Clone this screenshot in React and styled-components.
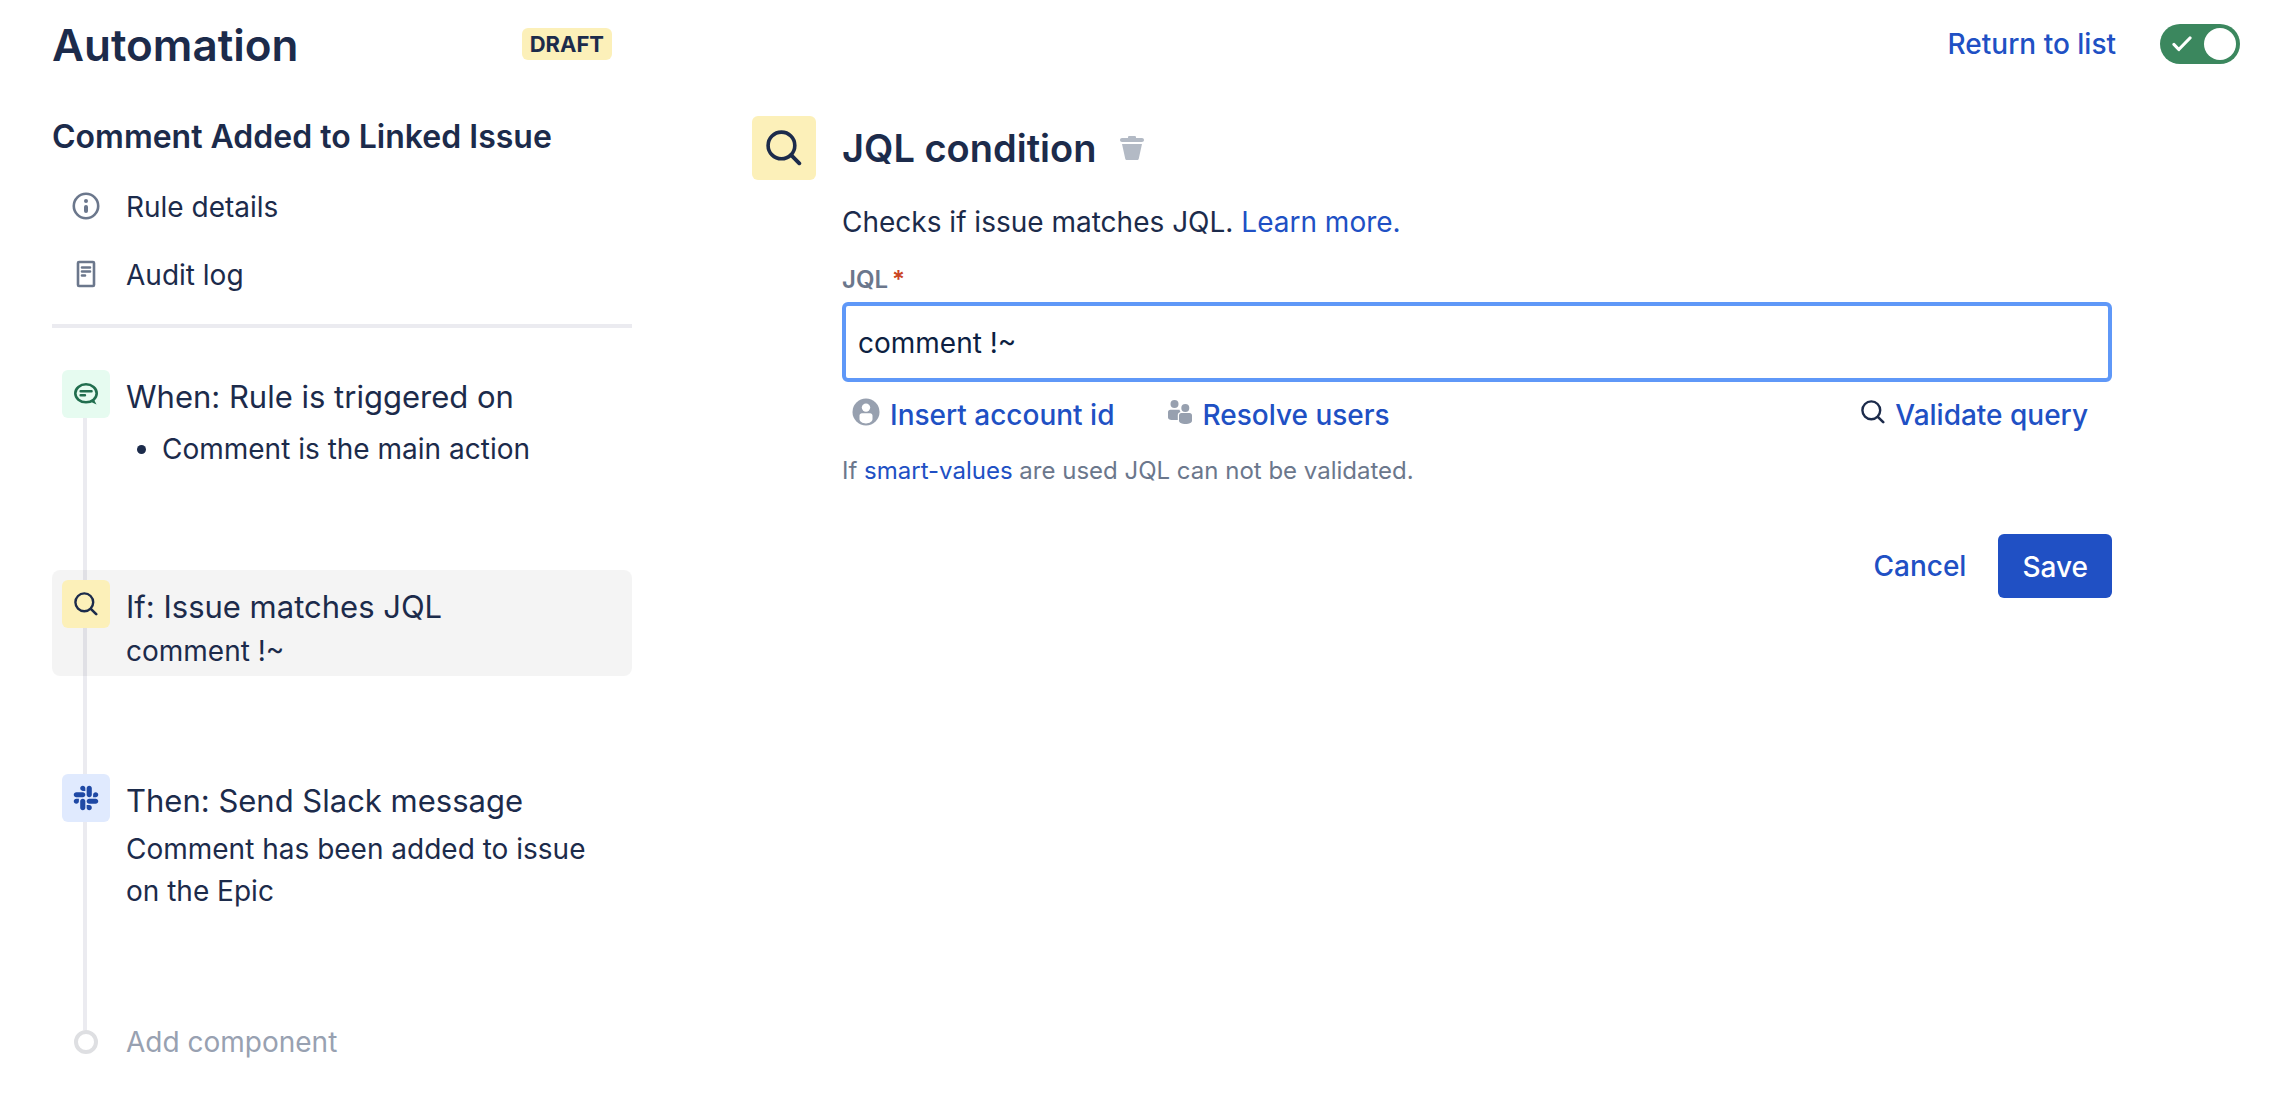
import { useState } from "react";
import styled, { createGlobalStyle } from "styled-components";
import { FaSlack } from "react-icons/fa";

const GlobalStyle = createGlobalStyle`
  * {
    box-sizing: border-box;
  }

  body {
    margin: 0;
    background-color: #ffffff;
    color: #1c2b4b;
    font-family: Inter, "Liberation Sans", sans-serif;
    font-size: 28px;
    line-height: 40px;
  }
`;

const Page = styled.div`
  padding: 0 42px 40px 52px;
`;

const Header = styled.header`
  display: flex;
  align-items: center;
  justify-content: space-between;
  height: 88px;
`;

const HeaderTitle = styled.div`
  display: flex;
  align-items: center;
  justify-content: space-between;
  width: 580px;
  padding-right: 20px;
`;

const PageTitle = styled.h1`
  margin: 0;
  padding-top: 2px;
  font-size: 44px;
  font-weight: 600;
  line-height: 56px;
`;

const Badge = styled.span`
  padding: 0 8px;
  border-radius: 6px;
  background-color: #fcf0b9;
  font-size: 22px;
  font-weight: 700;
  line-height: 32px;
`;

const HeaderActions = styled.div`
  display: flex;
  align-items: center;
  gap: 44px;
`;

const Link = styled.a`
  color: #2050c4;
  font-weight: ${({ $medium }) => ($medium ? 500 : 400)};
  text-decoration: none;
`;

const ToggleLabel = styled.label`
  display: flex;
  align-items: center;
  justify-content: space-between;
  width: 80px;
  height: 40px;
  padding: 0 4px 0 12px;
  border-radius: 20px;
  background-color: #3b875e;
  cursor: pointer;
`;

const ToggleInput = styled.input`
  appearance: none;
  order: 1;
  width: 32px;
  height: 32px;
  margin: 0;
  border-radius: 50%;
  background-color: #ffffff;
`;

const Columns = styled.div`
  display: grid;
  grid-template-columns: 580px 1fr;
  gap: 120px;
  padding-top: 28px;
`;

const RuleName = styled.h2`
  margin: 0 0 15px;
  font-size: 32px;
  font-weight: 600;
  line-height: 42px;
`;

const RuleNav = styled.nav`
  display: flex;
  flex-direction: column;
  padding-bottom: 15px;
  border-bottom: 4px solid #ebebf0;
`;

const NavItem = styled.a`
  display: grid;
  grid-template-columns: 48px 1fr;
  gap: 16px;
  align-items: center;
  height: 68px;
  padding-left: 10px;
  color: inherit;
  text-decoration: none;

  svg {
    justify-self: center;
    margin-bottom: 2px;
  }
`;

const Timeline = styled.ol`
  margin: 32px 0 0;
  padding: 0 0 26px;
  list-style: none;
  background: linear-gradient(#ebebf0, #ebebf0) 31px 20px / 4px 100% no-repeat;
`;

const Step = styled.li`
  display: grid;
  grid-template-columns: 48px 1fr;
  gap: 16px;
  align-items: start;
  margin-bottom: 88px;
  padding: 10px 20px 4px 10px;
  border-radius: 8px;
  background-color: ${({ $selected }) =>
    $selected ? "rgba(9, 9, 9, 0.043)" : "transparent"};
`;

const Tile = styled.span`
  display: flex;
  align-items: center;
  justify-content: center;
  width: ${({ $large }) => ($large ? "64px" : "48px")};
  height: ${({ $large }) => ($large ? "64px" : "48px")};
  border-radius: 6px;
  background-color: ${({ $color }) => $color};
`;

const StepTitle = styled.h3`
  margin: 0;
  padding-top: 4px;
  font-size: 31px;
  font-weight: 400;
  line-height: 46px;
`;

const StepText = styled.p`
  margin: ${({ $spaced }) => ($spaced ? "4px" : "0")} 0 0;
  line-height: 42px;
`;

const StepList = styled.ul`
  margin: 8px 0;
  padding-left: 36px;
  line-height: 42px;
  list-style: disc;
`;

const AddButton = styled.button`
  display: grid;
  grid-template-columns: 48px 1fr;
  gap: 16px;
  align-items: center;
  padding: 0 0 0 10px;
  border: 0;
  background: none;
  color: #98a1b1;
  font: inherit;
  line-height: 24px;
  cursor: pointer;
`;

const AddDot = styled.span`
  justify-self: center;
  width: 24px;
  height: 24px;
  border: 4px solid #dedfe2;
  border-radius: 50%;
`;

const Main = styled.main`
  padding-right: 128px;
`;

const ConditionHeader = styled.div`
  display: flex;
  align-items: center;
`;

const ConditionTitle = styled.h2`
  margin: 0 24px 0 26px;
  font-size: 38px;
  font-weight: 600;
  line-height: 48px;
`;

const IconButton = styled.button`
  display: flex;
  padding: 0;
  border: 0;
  background: none;
  cursor: pointer;
`;

const Form = styled.form`
  padding: 22px 0 0 90px;
`;

const Description = styled.p`
  margin: 0 0 22px;
`;

const Label = styled.label`
  display: block;
  margin-bottom: 6px;
  color: #6b778c;
  font-size: 24px;
  font-weight: 600;
  line-height: 32px;
`;

const Required = styled.span`
  margin-left: 4px;
  color: #cb4424;
`;

const Input = styled.input`
  display: block;
  width: 100%;
  height: 80px;
  padding: 2px 12px 0;
  border: 4px solid #5f98f8;
  border-radius: 6px;
  outline: none;
  color: #0d1f42;
  font: inherit;
`;

const QueryActions = styled.div`
  display: flex;
  gap: 54px;
  padding: 13px 24px 20px 10px;
`;

const TextButton = styled.button`
  display: flex;
  align-items: center;
  gap: 10px;
  margin-left: ${({ $end }) => ($end ? "auto" : "0")};
  padding: 0;
  border: 0;
  background: none;
  color: #2050c4;
  font: inherit;
  font-weight: 500;
  cursor: pointer;

  svg {
    margin-bottom: 6px;
  }
`;

const Hint = styled.p`
  margin: 0;
  color: #6b778c;
  font-size: 24px;
  line-height: 32px;
`;

const FormActions = styled.div`
  display: flex;
  align-items: center;
  justify-content: flex-end;
  gap: 32px;
  padding-top: 47px;
`;

const SaveButton = styled.button`
  height: 64px;
  padding: 2px 24px 0;
  border: 0;
  border-radius: 6px;
  background-color: #2050c4;
  color: #ffffff;
  font: inherit;
  font-weight: 500;
  cursor: pointer;
`;

function SearchIcon({ size }) {
  return (
    <svg width={size} height={size} viewBox="0 0 24 24" fill="none" stroke="#1c2b4b">
      <circle cx="10.3" cy="10.3" r="8.9" strokeWidth="2.4" />
      <path d="M16.8 16.8 L22.2 22.2" strokeWidth="2.6" strokeLinecap="round" />
    </svg>
  );
}

function InfoIcon() {
  return (
    <svg width="28" height="28" viewBox="0 0 28 28" fill="#6b778c">
      <circle cx="14" cy="14" r="12.2" fill="none" stroke="#6b778c" strokeWidth="2.6" />
      <circle cx="14" cy="9" r="2" />
      <rect x="12" y="13" width="4" height="8" rx="2" />
    </svg>
  );
}

function LogIcon() {
  return (
    <svg width="20" height="28" viewBox="0 0 20 28" fill="none" stroke="#6b778c">
      <rect x="2" y="2" width="16" height="24" rx="1" strokeWidth="2.6" />
      <path d="M6 7.5h8M6 11.5h8M6 15.5h3" strokeWidth="2.6" strokeLinecap="round" />
    </svg>
  );
}

function CommentIcon() {
  return (
    <svg width="24" height="24" viewBox="0 0 24 24" fill="none" stroke="#216e4e">
      <ellipse cx="12" cy="11.3" rx="10.7" ry="9" strokeWidth="2.6" />
      <path d="M6.6 9.2h11M6.6 13.2h4.4" strokeWidth="2.4" strokeLinecap="round" />
      <path d="M16 19.5 L19.6 17 L22.5 22.6 Z" fill="#216e4e" stroke="none" />
    </svg>
  );
}

function TrashIcon() {
  return (
    <svg width="24" height="24" viewBox="0 0 24 24" fill="#b3bac5">
      <path d="M8 2V1.2C8 .5 8.6 0 9.3 0h5.4c.7 0 1.3.5 1.3 1.2V2h6c1.1 0 2 .9 2 2s-.9 2-2 2H2C.9 6 0 5.1 0 4s.9-2 2-2z" />
      <path d="M2 8h20l-3.2 14.4c-.2.9-.9 1.6-1.8 1.6H7c-.9 0-1.6-.7-1.8-1.6z" />
    </svg>
  );
}

function PersonIcon() {
  return (
    <svg width="28" height="28" viewBox="0 0 28 28">
      <circle cx="14" cy="14" r="13.5" fill="#97a0af" />
      <circle cx="14" cy="9.6" r="4.2" fill="#ffffff" />
      <path d="M7.5 17.6c0-1.4 1-2.4 2.4-2.4h8.2c1.4 0 2.4 1 2.4 2.4v3.4c0 2.4-2.8 4.4-6.5 4.4s-6.5-2-6.5-4.4z" fill="#ffffff" />
    </svg>
  );
}

function PeopleIcon() {
  return (
    <svg width="24" height="24" viewBox="0 0 24 24" fill="#97a0af">
      <circle cx="6.5" cy="4" r="4" />
      <circle cx="17.3" cy="8" r="4" />
      <path d="M0 12.2c0-1.4.9-2.4 2.4-2.4h9.2c.1 1 .4 1.7.9 2.3-1.6.3-2.7 1.5-2.7 3V20H3.5C1.500 20 0 19 0 17.5z" />
      <path d="M11 15.4c0-1.4 1-2.4 2.4-2.4h8.2c1.4 0 2.4 1 2.4 2.4v5.3c0 1.9-2.8 3.3-6.5 3.3S11 22.6 11 20.7z" />
    </svg>
  );
}

function CheckIcon() {
  return (
    <svg width="20" height="16" viewBox="0 0 20 16" fill="none" stroke="#ffffff">
      <path d="M2 8.5 L6.8 13.5 L18 2" strokeWidth="3.2" strokeLinecap="round" strokeLinejoin="round" />
    </svg>
  );
}

export default function App() {
  const [query, setQuery] = useState("comment !~");
  const [enabled, setEnabled] = useState(true);

  return (
    <>
      <GlobalStyle />
      <Page>
        <Header>
          <HeaderTitle>
            <PageTitle>Automation</PageTitle>
            <Badge>DRAFT</Badge>
          </HeaderTitle>
          <HeaderActions>
            <Link href="#list" $medium>
              Return to list
            </Link>
            <ToggleLabel>
              <ToggleInput
                type="checkbox"
                role="switch"
                aria-label="Rule enabled"
                checked={enabled}
                onChange={(event) => setEnabled(event.target.checked)}
              />
              <CheckIcon />
            </ToggleLabel>
          </HeaderActions>
        </Header>
        <Columns>
          <aside>
            <RuleName>Comment Added to Linked Issue</RuleName>
            <RuleNav>
              <NavItem href="#details">
                <InfoIcon />
                Rule details
              </NavItem>
              <NavItem href="#log">
                <LogIcon />
                Audit log
              </NavItem>
            </RuleNav>
            <Timeline>
              <Step>
                <Tile $color="#e6fbf0">
                  <CommentIcon />
                </Tile>
                <div>
                  <StepTitle>When: Rule is triggered on</StepTitle>
                  <StepList>
                    <li>Comment is the main action</li>
                  </StepList>
                </div>
              </Step>
              <Step $selected>
                <Tile $color="#fcf0b9">
                  <SearchIcon size={24} />
                </Tile>
                <div>
                  <StepTitle>If: Issue matches JQL</StepTitle>
                  <StepText>{query}</StepText>
                </div>
              </Step>
              <Step>
                <Tile $color="#e0eafe">
                  <FaSlack size={28} color="#1f49a5" />
                </Tile>
                <div>
                  <StepTitle>Then: Send Slack message</StepTitle>
                  <StepText $spaced>
                    Comment has been added to issue on the Epic
                  </StepText>
                </div>
              </Step>
            </Timeline>
            <AddButton type="button">
              <AddDot />
              Add component
            </AddButton>
          </aside>
          <Main>
            <ConditionHeader>
              <Tile $large $color="#fcf0b9">
                <SearchIcon size={36} />
              </Tile>
              <ConditionTitle>JQL condition</ConditionTitle>
              <IconButton type="button" aria-label="Delete condition">
                <TrashIcon />
              </IconButton>
            </ConditionHeader>
            <Form onSubmit={(event) => event.preventDefault()}>
              <Description>
                Checks if issue matches JQL. <Link href="#learn">Learn more.</Link>
              </Description>
              <Label htmlFor="jql">
                JQL<Required>*</Required>
              </Label>
              <Input
                id="jql"
                type="text"
                value={query}
                onChange={(event) => setQuery(event.target.value)}
              />
              <QueryActions>
                <TextButton type="button">
                  <PersonIcon />
                  Insert account id
                </TextButton>
                <TextButton type="button">
                  <PeopleIcon />
                  Resolve users
                </TextButton>
                <TextButton type="button" $end>
                  <SearchIcon size={24} />
                  Validate query
                </TextButton>
              </QueryActions>
              <Hint>
                If <Link href="#smart-values">smart-values</Link> are used JQL can
                not be validated.
              </Hint>
              <FormActions>
                <TextButton type="button">Cancel</TextButton>
                <SaveButton type="submit">Save</SaveButton>
              </FormActions>
            </Form>
          </Main>
        </Columns>
      </Page>
    </>
  );
}
